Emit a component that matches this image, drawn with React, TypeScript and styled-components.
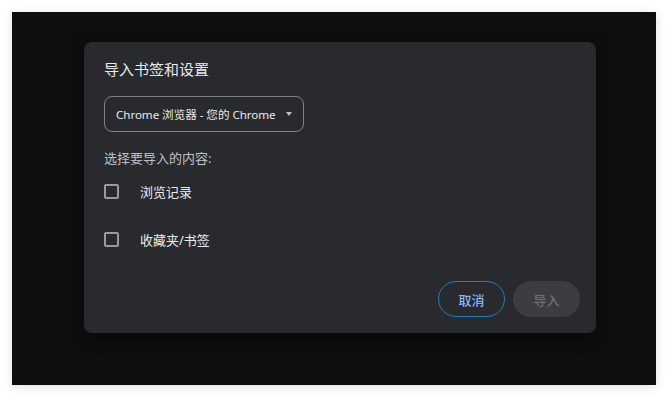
import React from 'react';
import styled, { createGlobalStyle } from 'styled-components';

const GlobalStyle = createGlobalStyle`
    html, body {
        margin: 0;
        padding: 0;
        background: #ffffff;
    }
    body {
        font-family: "Noto Sans", "Noto Sans CJK SC", sans-serif;
    }
`;

const Backdrop = styled.div`
    margin: 12px;
    width: 644px;
    height: 373px;
    box-sizing: border-box;
    padding: 30px 0 0 72px;
    background: #0e0e0f;
    box-shadow: 0 2px 10px rgba(0, 0, 0, 0.12);
`;

const Dialog = styled.div`
    width: 512px;
    height: 291px;
    box-sizing: border-box;
    padding: 17px 16px 16px 20px;
    display: flex;
    flex-direction: column;
    background: #292a2d;
    border-radius: 8px;
    box-shadow: 0 4px 16px rgba(0, 0, 0, 0.45);
`;

const Title = styled.h2`
    margin: 0;
    font-size: 15px;
    line-height: 20px;
    font-weight: 400;
    color: #e8eaed;
`;

const Select = styled.div`
    margin-top: 17px;
    width: 200px;
    height: 36px;
    box-sizing: border-box;
    padding: 0 11px 0 11px;
    display: flex;
    align-items: center;
    justify-content: space-between;
    border: 1px solid #7f8388;
    border-radius: 8px;
    color: #e8eaed;
    font-size: 11.6px;
    letter-spacing: -0.05px;
`;

const Arrow = styled.span`
    width: 0;
    height: 0;
    border-left: 3.5px solid transparent;
    border-right: 3.5px solid transparent;
    border-top: 4px solid #bdc1c6;
`;

const SectionLabel = styled.div`
    margin-top: 17px;
    font-size: 13px;
    line-height: 18px;
    color: #bdc1c6;
`;

const Row = styled.label`
    height: 48px;
    display: flex;
    align-items: center;
    gap: 21px;
    color: #e8eaed;
    font-size: 13px;
`;

const Box = styled.span`
    width: 15px;
    height: 15px;
    box-sizing: border-box;
    border: 2px solid #9a9b9d;
    border-radius: 2px;
`;

const Footer = styled.div`
    margin-top: auto;
    display: flex;
    justify-content: flex-end;
    gap: 8px;
`;

const Button = styled.button<{ $primary?: boolean }>`
    width: 67px;
    height: 36px;
    border-radius: 18px;
    font-family: inherit;
    font-size: 13px;
    font-weight: 500;
    border: ${ (p) => p.$primary ? 'none' : '1px solid #1a7fc1' };
    background: ${ (p) => p.$primary ? '#3c3d41' : 'transparent' };
    color: ${ (p) => p.$primary ? '#6e7074' : '#8ab4f8' };
`;

const items = ['浏览记录', '收藏夹/书签'];

export default function App() {
    return (
        <>
            <GlobalStyle/>
            <Backdrop>
                <Dialog>
                    <Title>导入书签和设置</Title>
                    <Select>
                        <span>Chrome 浏览器 - 您的 Chrome</span>
                        <Arrow/>
                    </Select>
                    <SectionLabel>选择要导入的内容:</SectionLabel>
                    { items.map((item) => (
                        <Row key={ item }>
                            <Box/>
                            { item }
                        </Row>
                    )) }
                    <Footer>
                        <Button>取消</Button>
                        <Button $primary disabled>导入</Button>
                    </Footer>
                </Dialog>
            </Backdrop>
        </>
    );
}
